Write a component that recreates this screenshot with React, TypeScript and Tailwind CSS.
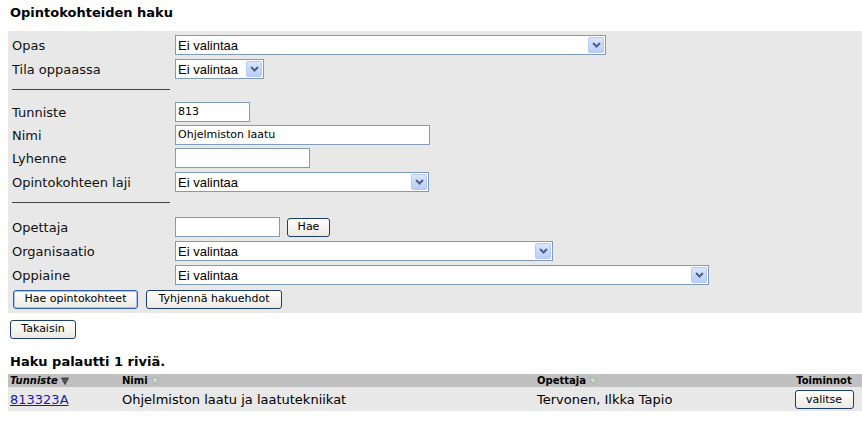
import React from 'react';

const verdana = { fontFamily: '"DejaVu Sans", Verdana, sans-serif' };

const Arrow: React.FC = () => (
  <span className="flex h-[16px] w-[16px] items-center justify-center rounded-[2px] border border-[#b6c9f5] bg-gradient-to-b from-[#dbe6fe] to-[#b7cdfb]">
    <svg width="9" height="6" viewBox="0 0 9 6">
      <path d="M1 1 L4.5 4.5 L8 1" fill="none" stroke="#4d6185" strokeWidth="2" />
    </svg>
  </span>
);

const FakeSelect: React.FC<{ width: string }> = ({ width }) => (
  <div className={`${width} flex h-[20px] items-center justify-between border border-[#7f9db9] bg-white pl-[2px] pr-[1px]`}>
    <span className="text-[13px] leading-none text-black" style={{ fontFamily: '"Liberation Sans", Arial, sans-serif' }}>
      Ei valintaa
    </span>
    <Arrow />
  </div>
);

const TextInput: React.FC<{ width: string; value?: string }> = ({ width, value }) => (
  <div className={`${width} flex h-[20px] items-center border border-[#7f9db9] bg-white px-[2px] text-[11px] text-black`}>
    {value}
  </div>
);

const Btn: React.FC<{ children: React.ReactNode; className?: string; strong?: boolean }> = ({ children, className, strong }) => (
  <button
    className={`flex h-[19px] items-center justify-center rounded-[3px] border ${strong ? 'border-[#2f5fa8] shadow-[inset_0_0_0_1px_#a8c4ee]' : 'border-[#1c3e6b]'} bg-gradient-to-b from-white to-[#ece9e1] px-[7px] text-[11px] text-black ${className ?? ''}`}
    style={verdana}
  >
    {children}
  </button>
);

const Row: React.FC<{ label: string; children: React.ReactNode; className?: string }> = ({ label, children, className }) => (
  <div className={`flex items-center ${className ?? ''}`}>
    <div className="w-[163px] text-[13px] leading-none text-[#111]">{label}</div>
    {children}
  </div>
);

const SortIcon: React.FC<{ dark?: boolean }> = ({ dark }) => (
  <svg width="8" height="8" viewBox="0 0 8 8" className="ml-[3px] inline-block">
    <path d="M0.5 1 L7.5 1 L4 7.5 Z" fill={dark ? '#555' : '#cfe0cf'} stroke={dark ? '#333' : '#9aa89a'} strokeWidth="0.8" />
  </svg>
);

export default function App() {
  return (
    <div className="min-h-[424px] w-[862px] bg-white" style={verdana}>
      <h1 className="pl-[10px] pt-[5px] text-[13px] font-bold leading-[16px] text-black">Opintokohteiden haku</h1>

      <div className="ml-[8px] mt-[10px] bg-[#e8e8e8] pb-[4px] pl-[4px] pt-[4px]">
        <Row label="Opas"><FakeSelect width="w-[431px]" /></Row>
        <Row label="Tila oppaassa" className="mt-[4px]"><FakeSelect width="w-[89px]" /></Row>
        <div className="mt-[10px] h-px w-[158px] bg-[#444]" />
        <Row label="Tunniste" className="mt-[12px]"><TextInput width="w-[75px]" value="813" /></Row>
        <Row label="Nimi" className="mt-[3px]"><TextInput width="w-[255px]" value="Ohjelmiston laatu" /></Row>
        <Row label="Lyhenne" className="mt-[3px]"><TextInput width="w-[135px]" /></Row>
        <Row label="Opintokohteen laji" className="mt-[4px]"><FakeSelect width="w-[254px]" /></Row>
        <div className="mt-[10px] h-px w-[158px] bg-[#444]" />
        <Row label="Opettaja" className="mt-[14px]">
          <TextInput width="w-[105px]" />
          <Btn className="ml-[7px] w-[43px]">Hae</Btn>
        </Row>
        <Row label="Organisaatio" className="mt-[4px]"><FakeSelect width="w-[378px]" /></Row>
        <Row label="Oppiaine" className="mt-[4px]"><FakeSelect width="w-[534px]" /></Row>
        <div className="mt-[5px] flex gap-[8px] pl-[1px]">
          <Btn strong className="w-[125px]">Hae opintokohteet</Btn>
          <Btn className="w-[136px]">Tyhjennä hakuehdot</Btn>
        </div>
      </div>

      <div className="ml-[10px] mt-[7px]">
        <Btn className="w-[66px]">Takaisin</Btn>
      </div>

      <h2 className="mt-[15px] pl-[10px] text-[13px] font-bold leading-[16px] text-black">Haku palautti 1 riviä.</h2>

      <div className="ml-[8px] mt-[4px]">
        <div className="grid h-[13px] grid-cols-[114px_415px_1fr_76px] items-center bg-[#c0c0c0] text-[10px] font-bold leading-none text-black">
          <div className="flex items-center pl-[2px] italic">Tunniste<SortIcon dark /></div>
          <div className="flex items-center">Nimi<SortIcon /></div>
          <div className="flex items-center">Opettaja<SortIcon /></div>
          <div className="text-center">Toiminnot</div>
        </div>
        <div className="grid h-[24px] grid-cols-[114px_415px_1fr_76px] items-center bg-[#e8e8e8] text-[13px] leading-none text-black">
          <div className="pl-[2px]"><a href="#" className="text-[#1a1aa6] underline">813323A</a></div>
          <div>Ohjelmiston laatu ja laatutekniikat</div>
          <div>Tervonen, Ilkka Tapio</div>
          <div className="flex justify-center"><Btn className="w-[59px]">valitse</Btn></div>
        </div>
      </div>
    </div>
  );
}
